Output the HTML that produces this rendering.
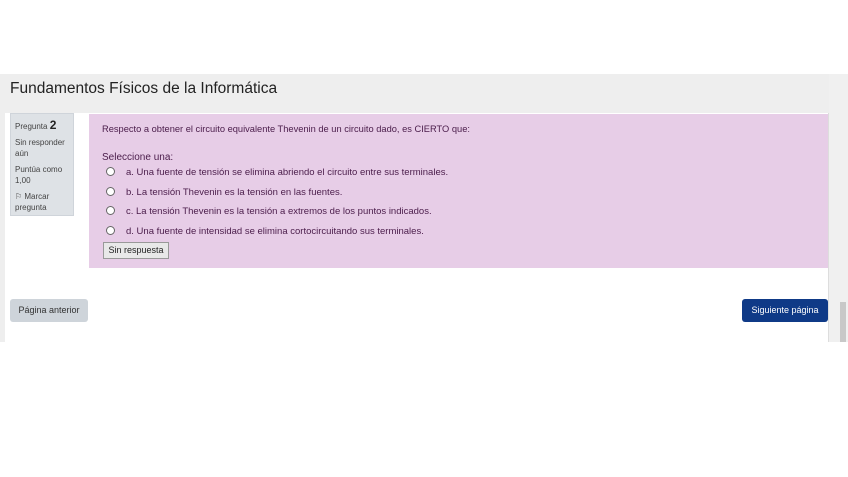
<!DOCTYPE html>
<html><head><meta charset="utf-8"><style>
body{margin:0;width:848px;height:477px;background:#fff;font-family:"Liberation Sans",sans-serif;position:relative;overflow:hidden}
.a{position:absolute}
.t{font-size:10px;color:#333}
.r{display:inline-block;width:7px;height:7px;border:1px solid #666;border-radius:50%;background:#fff;vertical-align:-1px;margin-right:11px}
</style></head><body>
<div class="a" style="left:0;top:74px;width:848px;height:268px;background:#fff"></div>
<div class="a" style="left:0;top:74px;width:848px;height:39px;background:#eee"></div>
<div class="a" style="left:0;top:113px;width:5px;height:229px;background:#eee"></div>
<div class="a" style="left:828px;top:113px;width:1px;height:229px;background:#ddd"></div>
<div class="a" style="left:829px;top:74px;width:19px;height:268px;background:#f0f0f0"></div>
<div class="a" style="left:840px;top:302px;width:6px;height:40px;background:#c8c8c8"></div>
<div class="a" style="left:10px;top:80px;font-size:15.5px;color:#222">Fundamentos Físicos de la Informática</div>
<div class="a" style="left:10px;top:113px;width:64px;height:103px;background:#dee2e6;border:1px solid #cfd4da;box-sizing:border-box"></div>
<div class="a t" style="left:15px;top:118px;font-size:8px;color:#444">Pregunta <b style="font-size:12px;color:#222">2</b></div>
<div class="a t" style="left:15px;top:137px;font-size:8px;line-height:11px;color:#444">Sin responder<br>aún</div>
<div class="a t" style="left:15px;top:164px;font-size:8px;line-height:11px;color:#444">Puntúa como<br>1,00</div>
<div class="a t" style="left:15px;top:191px;font-size:8px;line-height:11px;color:#444">⚐ Marcar<br>pregunta</div>
<div class="a" style="left:89px;top:114px;width:739px;height:154px;background:#e7cde7"></div>
<div class="a t" style="left:102px;top:124px;color:#4a1c4a;font-size:9.3px">Respecto a obtener el circuito equivalente Thevenin de un circuito dado, es CIERTO que:</div>
<div class="a t" style="left:102px;top:152px;color:#4a1c4a">Seleccione una:</div>
<div class="a t" style="left:106px;top:163px;color:#4a1c4a;line-height:19.5px;font-size:9.5px">
<div><span class="r"></span>a. Una fuente de tensión se elimina abriendo el circuito entre sus terminales.</div>
<div><span class="r"></span>b. La tensión Thevenin es la tensión en las fuentes.</div>
<div><span class="r"></span>c. La tensión Thevenin es la tensión a extremos de los puntos indicados.</div>
<div><span class="r"></span>d. Una fuente de intensidad se elimina cortocircuitando sus terminales.</div>
</div>
<div class="a t" style="left:103px;top:242px;width:64px;height:15px;background:#e8e8e8;border:1px solid #999;font-size:9px;line-height:15px;text-align:center;color:#222">Sin respuesta</div>
<div class="a" style="left:10px;top:299px;width:78px;height:23px;background:#ced4da;border-radius:3px;font-size:9px;line-height:23px;text-align:center;color:#333">Página anterior</div>
<div class="a" style="left:742px;top:299px;width:86px;height:23px;background:#0f3a87;border-radius:3px;font-size:9px;line-height:23px;text-align:center;color:#fff">Siguiente página</div>
</body></html>
